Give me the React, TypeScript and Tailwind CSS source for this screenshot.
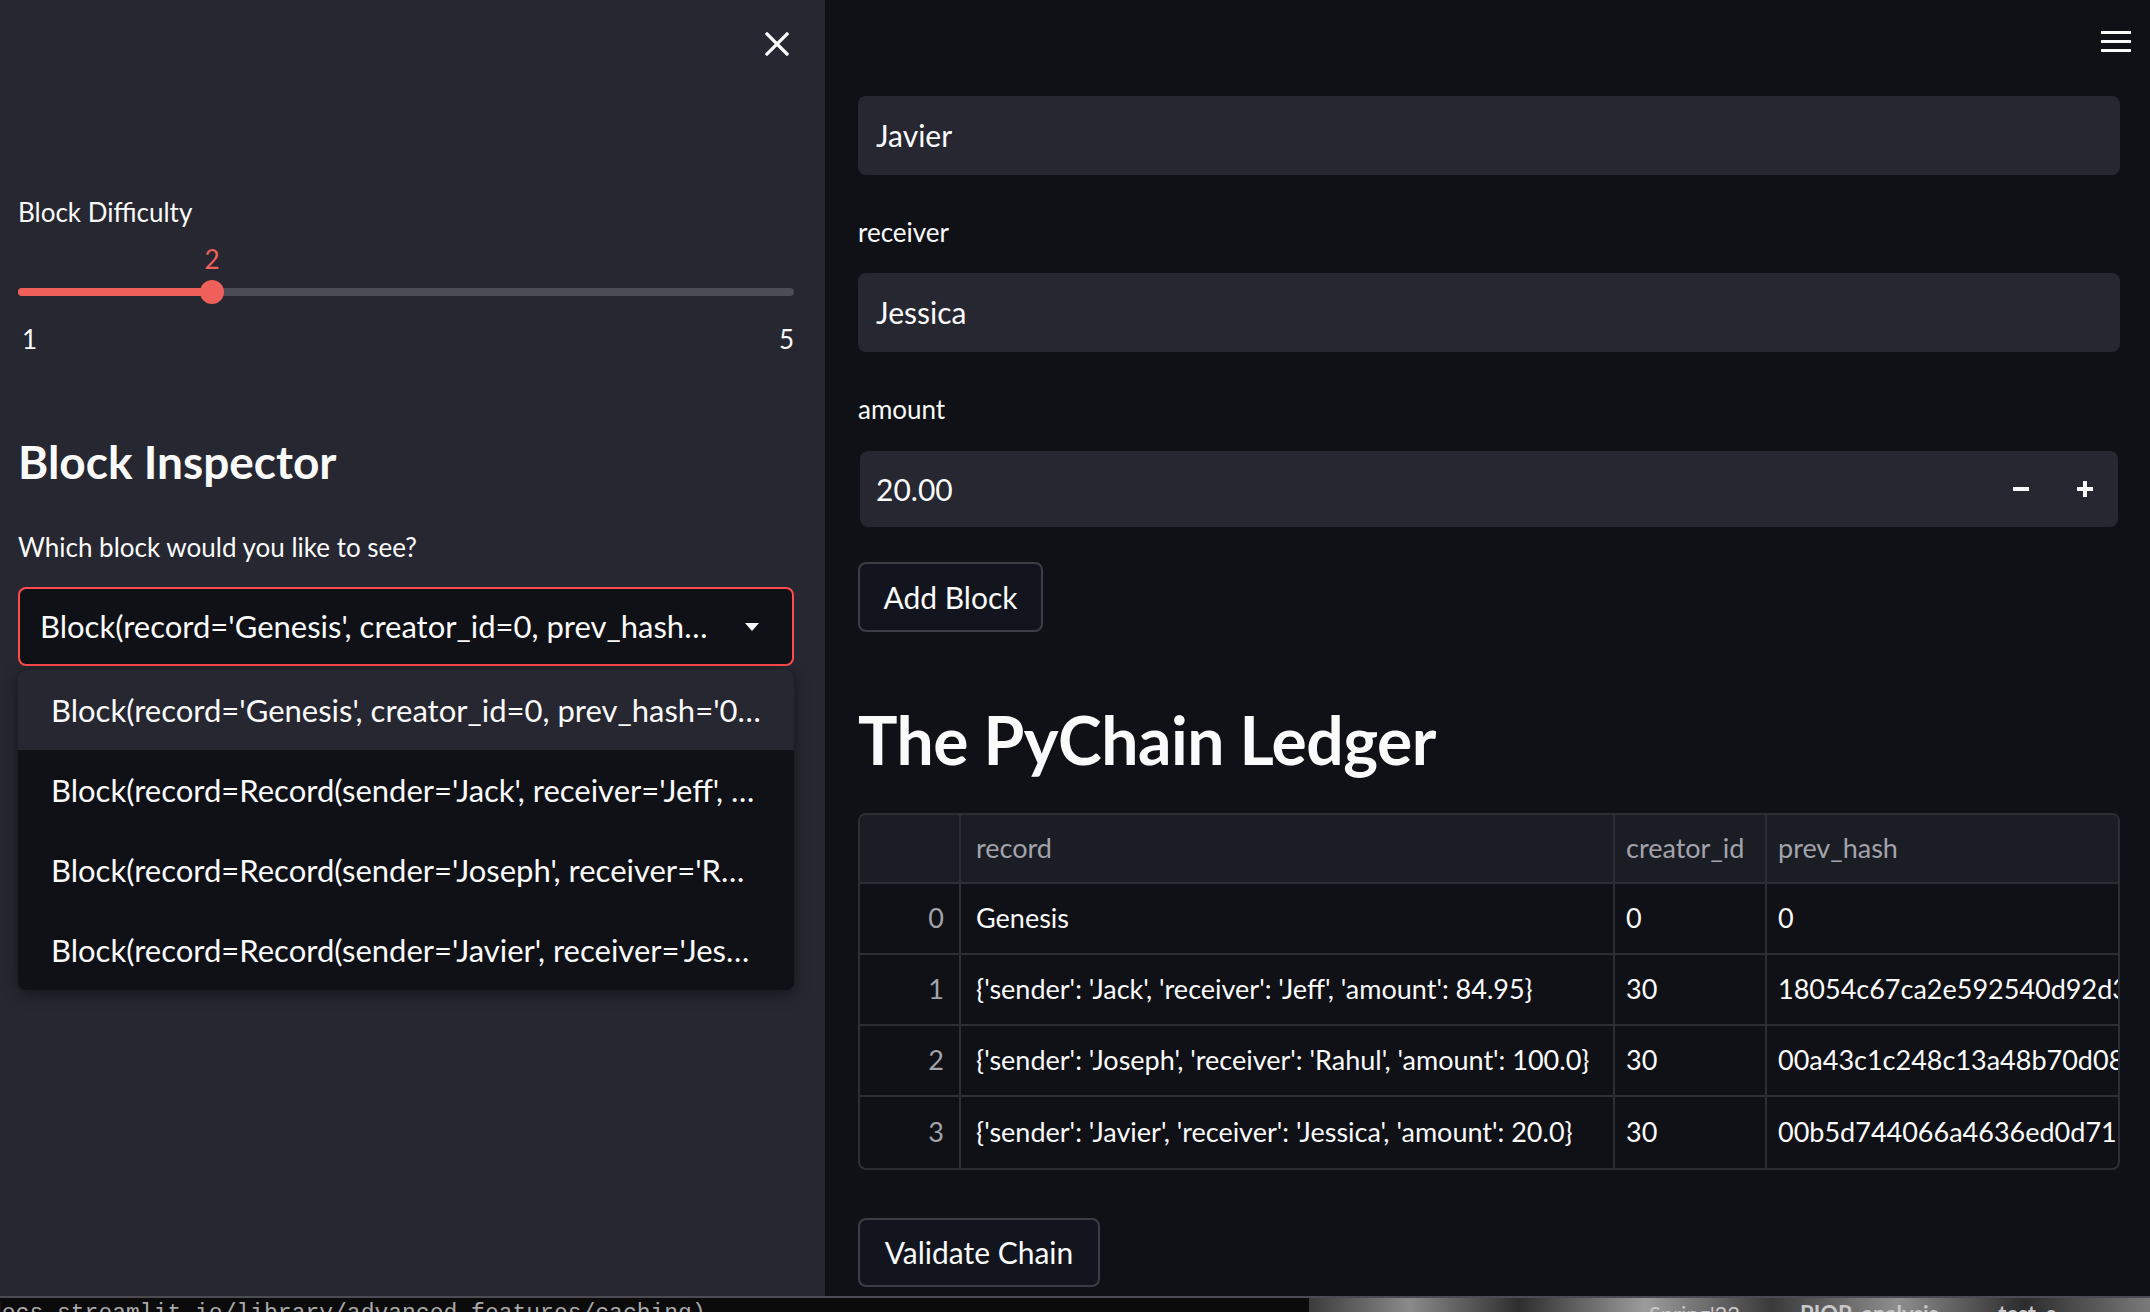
import { useState } from "react";

const options = [
  "Block(record='Genesis', creator_id=0, prev_hash='0…",
  "Block(record=Record(sender='Jack', receiver='Jeff', …",
  "Block(record=Record(sender='Joseph', receiver='R…",
  "Block(record=Record(sender='Javier', receiver='Jes…",
];

const ledger = [
  { record: "Genesis", creator: "0", hash: "0" },
  {
    record: "{'sender': 'Jack', 'receiver': 'Jeff', 'amount': 84.95}",
    creator: "30",
    hash: "18054c67ca2e592540d92d3b4f1a9e07c2d5",
  },
  {
    record: "{'sender': 'Joseph', 'receiver': 'Rahul', 'amount': 100.0}",
    creator: "30",
    hash: "00a43c1c248c13a48b70d0891be4c6f2a0d7",
  },
  {
    record: "{'sender': 'Javier', 'receiver': 'Jessica', 'amount': 20.0}",
    creator: "30",
    hash: "00b5d744066a4636ed0d71163ac9e85b2f41",
  },
];

export default function App() {
  const [difficulty] = useState(2);
  const pct = ((difficulty - 1) / (5 - 1)) * 100;

  return (
    <div className="w-[2150px] h-[1312px] overflow-hidden flex flex-col bg-black font-['Lato',sans-serif] text-[#fafafa]">
      <div className="flex h-[1296px]">
        {/* Sidebar */}
        <aside className="w-[825px] shrink-0 bg-[#262730] pl-[18px] pr-[31px]">
          <div className="h-[88px] flex items-center justify-end pr-[5px]">
            <svg width="24" height="24" viewBox="0 0 24 24" fill="none">
              <path d="M2 2L22 22M22 2L2 22" stroke="#fafafa" strokeWidth="3.2" strokeLinecap="square" />
            </svg>
          </div>

          <p className="mt-[106px] text-[26px] leading-[36px]">Block Difficulty</p>

          {/* Slider */}
          <div className="relative mt-[11px] h-[63px]">
            <span
              className="absolute top-0 -translate-x-1/2 text-[26px] leading-[36px] text-[#f0605a]"
              style={{ left: `${pct}%` }}
            >
              {difficulty}
            </span>
            <div className="absolute left-0 right-0 top-[47px] h-[8px] rounded-full bg-[#4b4c56]" />
            <div
              className="absolute left-0 top-[47px] h-[8px] rounded-full bg-[#f0605a]"
              style={{ width: `${pct}%` }}
            />
            <div
              className="absolute top-[39px] w-[24px] h-[24px] -translate-x-1/2 rounded-full bg-[#f0605a]"
              style={{ left: `${pct}%` }}
            />
          </div>
          <div className="mt-[17px] flex justify-between text-[26px] leading-[36px]">
            <span className="pl-[4px]">1</span>
            <span>5</span>
          </div>

          <h3 className="mt-[79px] text-[46px] leading-[52px] font-bold">Block Inspector</h3>

          <p className="mt-[41px] text-[26px] leading-[36px]">Which block would you like to see?</p>

          {/* Select with open menu */}
          <div className="relative mt-[22px]">
            <div className="h-[79px] rounded-[8px] border-2 border-[#ff4b4b] bg-[#0f1117] flex items-center pl-[20px] pr-[32px]">
              <span className="flex-1 truncate text-[31px]">
                Block(record='Genesis', creator_id=0, prev_hash…
              </span>
              <svg width="16" height="10" viewBox="0 0 16 10" className="ml-[20px] shrink-0">
                <path d="M1 1H15L8 9Z" fill="#fafafa" />
              </svg>
            </div>
            <ul className="absolute left-0 right-0 top-[83px] rounded-[8px] bg-[#0f1117] shadow-[0_4px_16px_rgba(0,0,0,0.45)] overflow-hidden z-10">
              {options.map((o, i) => (
                <li
                  key={o}
                  className={`h-[80px] flex items-center pl-[33px] pr-[24px] text-[31px] ${
                    i === 0 ? "bg-[#262730]" : ""
                  }`}
                >
                  <span className="truncate">{o}</span>
                </li>
              ))}
            </ul>
          </div>
        </aside>

        {/* Main */}
        <main className="flex-1 min-w-0 overflow-hidden bg-[#0f1117] flex flex-col">
          <div className="h-[96px] flex justify-end items-start pt-[31px] pr-[19px]">
            <svg width="30" height="21" viewBox="0 0 30 21">
              <rect x="0" y="0" width="30" height="3" fill="#fafafa" />
              <rect x="0" y="9" width="30" height="3" fill="#fafafa" />
              <rect x="0" y="18" width="30" height="3" fill="#fafafa" />
            </svg>
          </div>

          <div className="min-w-0 pl-[33px] pr-[30px] flex flex-col">
            <div className="h-[79px] rounded-[8px] bg-[#262730] flex items-center pl-[18px] text-[30px]">
              Javier
            </div>

            <p className="mt-[39px] text-[26px] leading-[36px]">receiver</p>
            <div className="mt-[23px] h-[79px] rounded-[8px] bg-[#262730] flex items-center pl-[18px] text-[30px]">
              Jessica
            </div>

            <p className="mt-[39px] text-[26px] leading-[36px]">amount</p>
            <div className="mt-[24px] ml-[2px] mr-[2px] h-[76px] rounded-[8px] bg-[#262730] flex items-center pl-[16px] text-[30px]">
              <span className="flex-1">20.00</span>
              <div className="w-[64px] h-full flex items-center justify-center">
                <div className="w-[16px] h-[4px] bg-[#fafafa]" />
              </div>
              <div className="w-[64px] h-full flex items-center justify-center mr-[1px]">
                <svg width="16" height="16" viewBox="0 0 16 16">
                  <rect x="0" y="6" width="16" height="4" fill="#fafafa" />
                  <rect x="6" y="0" width="4" height="16" fill="#fafafa" />
                </svg>
              </div>
            </div>

            <button className="mt-[35px] w-[185px] h-[70px] rounded-[8px] border-2 border-[#3b3d47] bg-[#12151d] text-[30px] text-[#fafafa]">
              Add Block
            </button>

            <h1 className="mt-[68px] text-[66px] leading-[80px] font-bold tracking-[-0.5px]">The PyChain Ledger</h1>

            {/* Dataframe */}
            <div className="mt-[33px] min-w-0 rounded-[8px] border-2 border-[#2c2e36] overflow-hidden text-[27px]">
              <div className="flex h-[69px] bg-[#1b1d25] border-b-2 border-[#2c2e36] text-[#a3a3ab]">
                <div className="w-[101px] shrink-0 border-r-2 border-[#2c2e36]" />
                <div className="w-[654px] shrink-0 border-r-2 border-[#2c2e36] flex items-center pl-[15px]">record</div>
                <div className="w-[152px] shrink-0 border-r-2 border-[#2c2e36] flex items-center pl-[11px]">creator_id</div>
                <div className="flex-1 min-w-0 flex items-center pl-[11px] whitespace-nowrap overflow-hidden">prev_hash</div>
              </div>
              {ledger.map((row, i) => (
                <div
                  key={i}
                  className={`flex h-[71px] ${i < ledger.length - 1 ? "border-b-2 border-[#2c2e36]" : ""}`}
                >
                  <div className="w-[101px] shrink-0 border-r-2 border-[#2c2e36] flex items-center justify-end pr-[15px] text-[#a3a3ab]">
                    {i}
                  </div>
                  <div className="w-[654px] shrink-0 border-r-2 border-[#2c2e36] flex items-center pl-[15px] whitespace-nowrap overflow-hidden">
                    {row.record}
                  </div>
                  <div className="w-[152px] shrink-0 border-r-2 border-[#2c2e36] flex items-center pl-[11px]">
                    {row.creator}
                  </div>
                  <div className="flex-1 min-w-0 flex items-center pl-[11px] whitespace-nowrap overflow-hidden">
                    {row.hash}
                  </div>
                </div>
              ))}
            </div>

            <button className="mt-[48px] w-[242px] h-[69px] rounded-[8px] border-2 border-[#3b3d47] bg-[#12151d] text-[30px] text-[#fafafa]">
              Validate Chain
            </button>
          </div>
        </main>
      </div>

      {/* Desktop strip below the window */}
      <div className="h-[16px] border-t-2 border-[#4b4b51] flex overflow-hidden">
        <div className="w-[1309px] shrink-0 bg-[#0b0b0c] overflow-hidden">
          <p className="-ml-[12px] mt-[2px] whitespace-nowrap font-['Liberation_Mono',monospace] text-[23px] leading-[28px] text-[#a8a8a8]">
            docs.streamlit.io/library/advanced_features/caching)
          </p>
        </div>
        <div className="flex-1 bg-[linear-gradient(90deg,#3c3c3c,#8a8a8a_12%,#2e2e2e_25%,#9c9c9c_40%,#3a3a3a_55%,#8e8e8e_70%,#2c2c2c_85%,#7a7a7a)] overflow-hidden flex gap-[60px] pl-[340px]">
          <span className="mt-[2px] whitespace-nowrap text-[22px] leading-[28px] text-[#c8c8c8]">Spring'22</span>
          <span className="mt-[2px] whitespace-nowrap text-[22px] leading-[28px] font-bold text-[#c8c8c8]">PIOP_analysis</span>
          <span className="mt-[2px] whitespace-nowrap text-[22px] leading-[28px] font-bold text-[#c8c8c8]">test_s</span>
        </div>
      </div>
    </div>
  );
}
